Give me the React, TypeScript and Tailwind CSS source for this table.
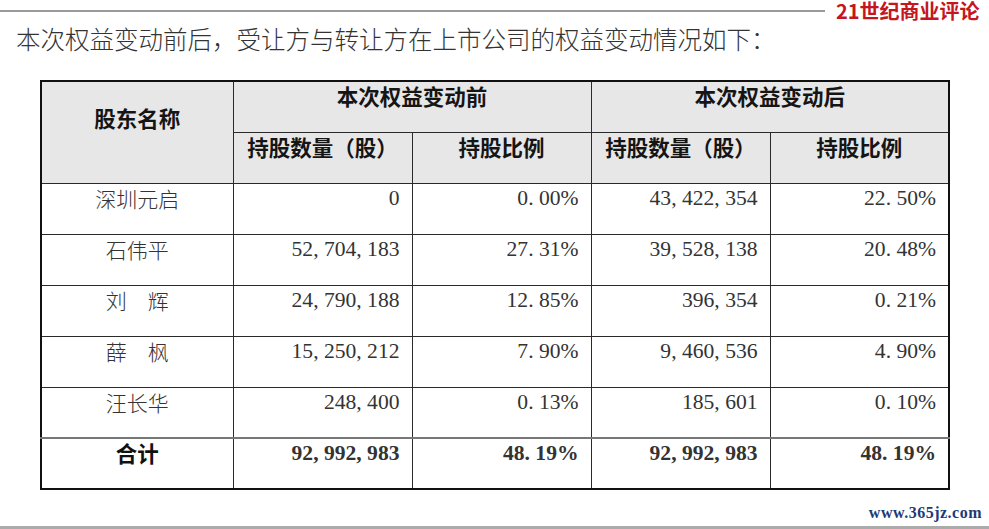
import React from 'react';

const sans = '"Noto Sans CJK SC", "Noto Sans", sans-serif';
const serif = '"Liberation Serif", "Noto Sans CJK SC", serif';

type Row = { name: string; beforeQty: string; beforePct: string; afterQty: string; afterPct: string };

const rows: Row[] = [
  { name: '深圳元启', beforeQty: '0', beforePct: '0. 00%', afterQty: '43, 422, 354', afterPct: '22. 50%' },
  { name: '石伟平', beforeQty: '52, 704, 183', beforePct: '27. 31%', afterQty: '39, 528, 138', afterPct: '20. 48%' },
  { name: '刘　辉', beforeQty: '24, 790, 188', beforePct: '12. 85%', afterQty: '396, 354', afterPct: '0. 21%' },
  { name: '薛　枫', beforeQty: '15, 250, 212', beforePct: '7. 90%', afterQty: '9, 460, 536', afterPct: '4. 90%' },
  { name: '汪长华', beforeQty: '248, 400', beforePct: '0. 13%', afterQty: '185, 601', afterPct: '0. 10%' },
];

const total: Row = {
  name: '合计',
  beforeQty: '92, 992, 983',
  beforePct: '48. 19%',
  afterQty: '92, 992, 983',
  afterPct: '48. 19%',
};

const cell = 'border border-[#2a2a2a] align-top pt-0 leading-[28px] h-[51px]';
const head = `${cell} bg-[#e7e7e7] text-center text-[21.5px] font-bold text-[#151515]`;
const num = `${cell} text-right pr-[12px] text-[21.6px] text-[#333]`;
const sum = 'border-t-2 border-t-[#777] font-bold text-[#111]';

export default function App() {
  return (
    <div className="w-[989px] h-[529px] overflow-hidden bg-white flex flex-col">
      {/* 顶部横线 + 刊名 */}
      <div className="h-[24px] flex items-start shrink-0">
        <div className="mt-[10px] w-[825px] h-[2px] bg-[#9a9a9a] shrink-0" />
        <span
          className="ml-[11px] shrink-0 whitespace-nowrap text-[20px] leading-[22px] font-bold text-[#c4161f]"
          style={{ fontFamily: sans }}
        >
          21世纪商业评论
        </span>
      </div>

      <p
        className="pl-[16px] text-[24.5px] leading-[30px] font-light text-[#333] whitespace-nowrap"
        style={{ fontFamily: sans }}
      >
        本次权益变动前后，受让方与转让方在上市公司的权益变动情况如下：
      </p>

      <div className="ml-[40px] mt-[26px]">
        <table className="w-[908px] table-fixed border-collapse border-2 border-[#111]">
          <colgroup>
            <col className="w-[192px]" />
            <col className="w-[179px]" />
            <col className="w-[179px]" />
            <col className="w-[179px]" />
            <col className="w-[179px]" />
          </colgroup>
          <thead style={{ fontFamily: sans }}>
            <tr>
              <th rowSpan={2} className={`${head} pt-[22px]`}>
                股东名称
              </th>
              <th colSpan={2} className={head}>
                本次权益变动前
              </th>
              <th colSpan={2} className={head}>
                本次权益变动后
              </th>
            </tr>
            <tr>
              <th className={head}>持股数量（股）</th>
              <th className={head}>持股比例</th>
              <th className={head}>持股数量（股）</th>
              <th className={head}>持股比例</th>
            </tr>
          </thead>
          <tbody>
            {rows.map((r) => (
              <tr key={r.name}>
                <td
                  className={`${cell} text-center text-[21px] font-light text-[#333]`}
                  style={{ fontFamily: sans }}
                >
                  {r.name}
                </td>
                <td className={num} style={{ fontFamily: serif }}>{r.beforeQty}</td>
                <td className={num} style={{ fontFamily: serif }}>{r.beforePct}</td>
                <td className={num} style={{ fontFamily: serif }}>{r.afterQty}</td>
                <td className={num} style={{ fontFamily: serif }}>{r.afterPct}</td>
              </tr>
            ))}
            <tr>
              <td
                className={`${cell} ${sum} text-center text-[21.5px]`}
                style={{ fontFamily: sans }}
              >
                {total.name}
              </td>
              <td className={`${num} ${sum}`} style={{ fontFamily: serif }}>{total.beforeQty}</td>
              <td className={`${num} ${sum}`} style={{ fontFamily: serif }}>{total.beforePct}</td>
              <td className={`${num} ${sum}`} style={{ fontFamily: serif }}>{total.afterQty}</td>
              <td className={`${num} ${sum}`} style={{ fontFamily: serif }}>{total.afterPct}</td>
            </tr>
          </tbody>
        </table>
      </div>

      <div className="flex-1 flex flex-col justify-end">
        <div className="flex justify-end pr-[7px]">
          <span
            className="text-[16px] leading-[20px] font-bold text-[#1e3a78] tracking-[0.5px]"
            style={{ fontFamily: serif }}
          >
            www.365jz.com
          </span>
        </div>
        <div className="mt-[3px] h-[3px] bg-[#ababab]" />
      </div>
    </div>
  );
}
